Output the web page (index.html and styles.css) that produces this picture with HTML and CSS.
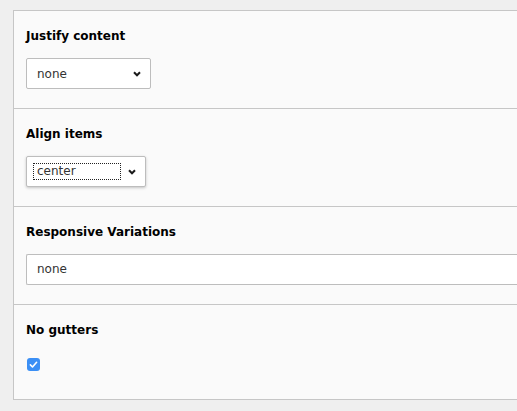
FILE: index.html
```html
<!DOCTYPE html>
<html lang="en">
<head>
<meta charset="utf-8">
<title>Grid settings</title>
<link rel="stylesheet" href="styles.css">
</head>
<body>
<div class="page">
  <div class="panel">
    <div class="field">
      <div class="label">Justify content</div>
      <div class="select select-justify">
        <span class="select-value">none</span>
        <svg class="chev" width="8" height="6" viewBox="0 0 8 6"><path d="M1 1.2 L4 4.3 L7 1.2" fill="none" stroke="#1a1a1a" stroke-width="2"/></svg>
      </div>
    </div>
    <div class="field">
      <div class="label">Align items</div>
      <div class="select select-align">
        <span class="select-value focus-ring">center</span>
        <svg class="chev" width="8" height="6" viewBox="0 0 8 6"><path d="M1 1.2 L4 4.3 L7 1.2" fill="none" stroke="#1a1a1a" stroke-width="2"/></svg>
      </div>
    </div>
    <div class="field">
      <div class="label">Responsive Variations</div>
      <div class="input">none</div>
    </div>
    <div class="field field-last">
      <div class="label">No gutters</div>
      <div class="check-row">
        <svg class="checkbox" width="13" height="13" viewBox="0 0 13 13"><rect x="0" y="0" width="13" height="13" rx="3" fill="#3b8ff5"/><path d="M3.4 6.9 L5.5 9 L9.6 4.3" fill="none" stroke="#fff" stroke-width="1.6" stroke-linecap="round" stroke-linejoin="round"/></svg>
      </div>
    </div>
  </div>
</div>
</body>
</html>
```
FILE: styles.css
```css
html, body {
  margin: 0;
  height: 100%;
  overflow: hidden;
  background: #efefef;
}

.page {
  padding: 10px 0 0 13px;
}

.panel {
  background: #fafafa;
  border: 1px solid #c6c6c6;
  border-right: none;
}

.field {
  padding: 16px 0 19px 12px;
  border-bottom: 1px solid #c6c6c6;
}

.field-last {
  border-bottom: none;
  padding-bottom: 28px;
}

.label {
  font: bold 12px/18px "DejaVu Sans", Verdana, sans-serif;
  color: #000;
  margin-bottom: 13px;
}

.select {
  display: flex;
  align-items: center;
  justify-content: space-between;
  box-sizing: border-box;
  height: 31px;
  border: 1px solid #bdbdbd;
  border-radius: 2px;
  background: #fff;
  padding: 0 9px 0 10px;
  font: 12px/16px "DejaVu Sans", Verdana, sans-serif;
  color: #333;
}

.select-justify {
  width: 125px;
}

.select-align {
  width: 120px;
  padding-left: 6px;
  box-shadow: 0 1px 3px rgba(0, 0, 0, 0.22);
}

.focus-ring {
  box-sizing: border-box;
  width: 88px;
  height: 17px;
  border: 1px dotted #222;
  padding-left: 3px;
  line-height: 15px;
}

.chev {
  display: block;
  flex: none;
}

.input {
  box-sizing: border-box;
  height: 31px;
  border: 1px solid #bdbdbd;
  border-right: none;
  border-radius: 2px 0 0 2px;
  background: #fff;
  padding: 0 10px;
  font: 12px/29px "DejaVu Sans", Verdana, sans-serif;
  color: #333;
}

.check-row {
  padding-top: 6px;
  height: 13px;
}

.checkbox {
  display: block;
  margin-left: 1px;
}
```
